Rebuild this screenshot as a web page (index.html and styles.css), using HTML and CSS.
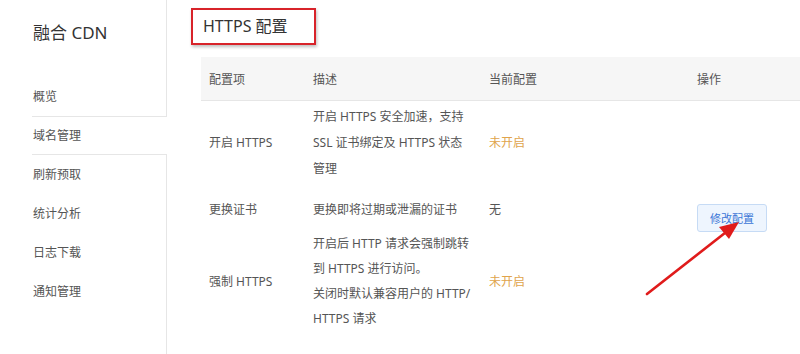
FILE: index.html
```html
<!DOCTYPE html>
<html lang="zh-CN">
<head>
    <meta charset="UTF-8">
    <title>融合 CDN - HTTPS 配置</title>
    <link rel="stylesheet" href="styles.css">
</head>
<body>
    <div class="page">
        <aside class="sidebar">
            <div class="brand">融合 CDN</div>
            <ul class="nav">
                <li>概览</li>
                <li class="active">域名管理</li>
                <li>刷新预取</li>
                <li>统计分析</li>
                <li>日志下载</li>
                <li>通知管理</li>
            </ul>
        </aside>

        <main class="main">
            <h2 class="title">HTTPS 配置</h2>

            <div class="table">
                <div class="row head">
                    <div>配置项</div>
                    <div>描述</div>
                    <div>当前配置</div>
                    <div>操作</div>
                </div>
                <div class="row r1">
                    <div>开启 HTTPS</div>
                    <div>开启 HTTPS 安全加速，支持<br>SSL 证书绑定及 HTTPS 状态<br>管理</div>
                    <div class="off">未开启</div>
                    <div></div>
                </div>
                <div class="row r2">
                    <div>更换证书</div>
                    <div>更换即将过期或泄漏的证书</div>
                    <div>无</div>
                    <div class="action"><button class="btn">修改配置</button></div>
                </div>
                <div class="row r3">
                    <div>强制 HTTPS</div>
                    <div>开启后 HTTP 请求会强制跳转<br>到 HTTPS 进行访问。<br>关闭时默认兼容用户的 HTTP/<br>HTTPS 请求</div>
                    <div class="off">未开启</div>
                    <div></div>
                </div>
            </div>

            <!-- annotation arrow pointing at the button -->
            <svg class="arrow" width="633" height="354" viewBox="0 0 633 354">
                <line x1="480" y1="294" x2="563" y2="229" stroke="#e01b1b" stroke-width="2.6" stroke-linecap="round"/>
                <polygon points="572,222 552,227 562,239" fill="#e01b1b"/>
            </svg>
        </main>
    </div>
</body>
</html>
```

FILE: styles.css
```css
body {
    margin: 0;
    font-family: "Noto Sans", "Noto Sans CJK SC", sans-serif;
    font-size: 12px;
    color: #555;
    background: #fff;
}

.page {
    display: flex;
    height: 354px;
    overflow: hidden;
}

.sidebar {
    width: 166px;
    flex-shrink: 0;
    border-right: 1px solid #e6e6e6;
}

.brand {
    padding: 21px 0 0 33px;
    height: 35px;
    line-height: 24px;
    font-size: 17px;
    color: #333;
}

.nav {
    list-style: none;
    margin: 21px 0 0 32px;
    padding: 0;
}

.nav li {
    height: 39px;
    line-height: 39px;
    padding-left: 1px;
    color: #555;
    box-sizing: border-box;
}

.nav li.active {
    position: relative;
    line-height: 37px;
    margin-right: -1px;
    background: #fff;
    border-top: 1px solid #e6e6e6;
    border-bottom: 1px solid #e6e6e6;
}

.main {
    flex: 1;
    position: relative;
}

.title {
    width: max-content;
    margin: 8px 0 0 24px;
    padding: 0 26px 0 10px;
    height: 33px;
    line-height: 33px;
    font-size: 16px;
    font-weight: normal;
    color: #333;
    border: 2px solid #d8232a;
    box-shadow: 1px 2px 3px rgba(0, 0, 0, 0.25);
}

.table {
    margin: 12px 0 0 34px;
}

.row {
    display: grid;
    grid-template-columns: 104px 176px 208px 1fr;
    align-items: center;
}

.row > div {
    padding-left: 8px;
    white-space: nowrap;
}

.head {
    height: 43px;
    background: #f6f6f6;
    border-bottom: 1px solid #e6e6e6;
    color: #555;
}

.r1 {
    height: 84px;
    line-height: 26px;
}

.r2 {
    height: 42px;
}

.r3 {
    height: 108px;
    line-height: 25px;
}

.off {
    color: #e0a44c;
}

.action {
    align-self: start;
    padding-top: 19px;
}

.btn {
    width: 70px;
    height: 28px;
    padding: 0;
    font-family: inherit;
    font-size: 11px;
    color: #3b76d6;
    background: #eef5fe;
    border: 1px solid #c6dbf5;
    border-radius: 3px;
}

.arrow {
    position: absolute;
    top: 0;
    left: 0;
    pointer-events: none;
}
```
